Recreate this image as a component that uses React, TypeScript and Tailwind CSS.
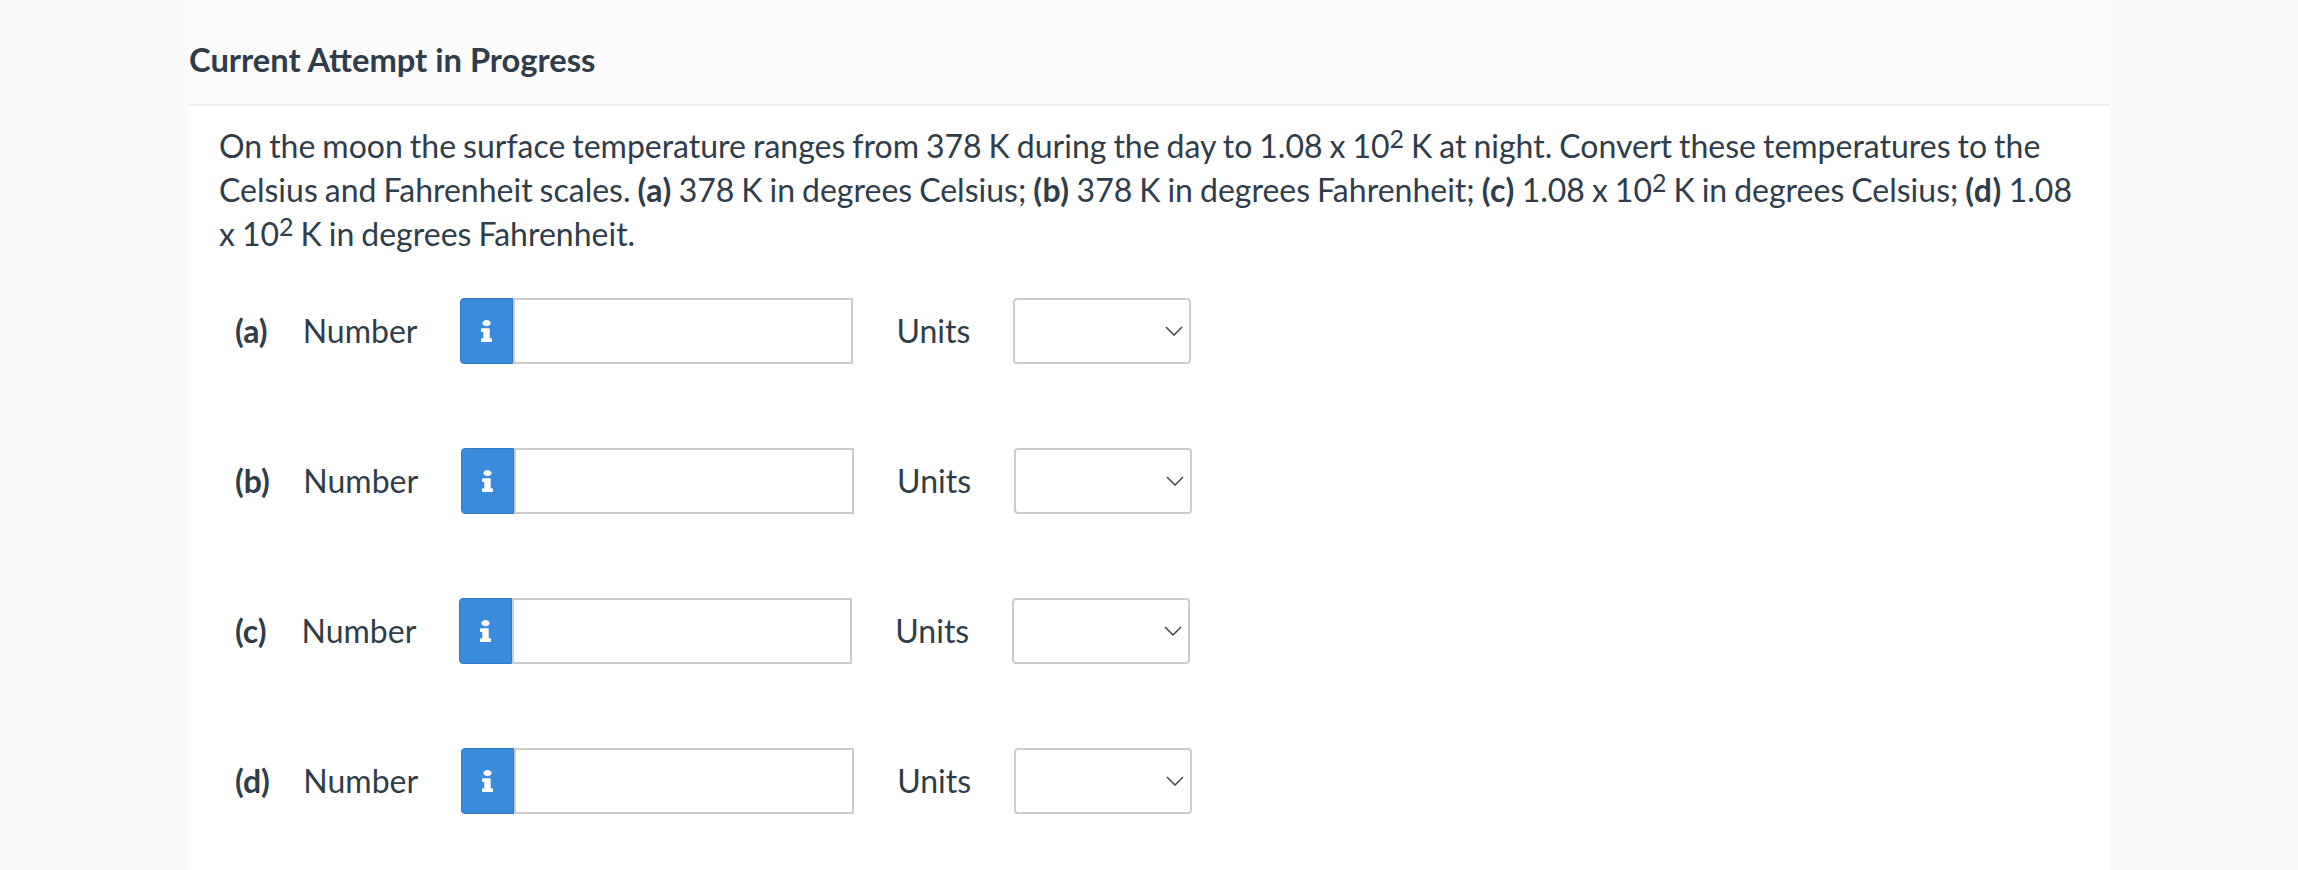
import { FaInfo } from "react-icons/fa";

const rows = [
  { label: "(a)", gap: "ml-[35px]" },
  { label: "(b)", gap: "ml-[33.5px]" },
  { label: "(c)", gap: "ml-[35px]" },
  { label: "(d)", gap: "ml-[33.5px]" },
];

const Row = ({ label, gap }: { label: string; gap: string }) => {
  return (
    <div className="flex items-center h-[66px] mb-[84px]">
      <span className="font-bold">{label}</span>
      <span className={gap}>Number</span>
      <button className="ml-[43px] w-[53px] h-[66px] flex items-center justify-center bg-[#3b8bdd] border border-[#3278c2] rounded-l-[4px] text-white">
        <FaInfo className="w-[11px] h-[22px]" preserveAspectRatio="none" />
      </button>
      <input
        type="text"
        className="w-[340px] h-[66px] bg-white border-2 border-[#cccccc] outline-none"
      />
      <span className="ml-[43px]">Units</span>
      <div className="ml-[43px] w-[178px] h-[66px] flex items-center justify-end pr-[6px] bg-white border-2 border-[#cccccc] rounded-[4px]">
        <svg width="18" height="10" viewBox="0 0 18 10" fill="none" stroke="#444444" strokeWidth="1.5">
          <path d="M1 1l8 8 8-8" />
        </svg>
      </div>
    </div>
  );
};

export default function App() {
  return (
    <div className="min-h-[870px] bg-[#fafafa] font-['Lato',sans-serif] text-[#2f3d4a]">
      <div className="w-[1921px] h-[870px] ml-[189px] bg-white overflow-hidden">
        <div className="h-[106px] flex items-center pt-[16px] bg-[#fcfcfc] border-b-2 border-[#eeeeee] text-[32.7px] font-bold">
          Current Attempt in Progress
        </div>
        <div className="pl-[30px] pr-[30px] pt-[18px] text-[32px] leading-[44px] [word-spacing:-1.2px] [&_b]:tracking-[0.5px] [&_sup]:text-[25px] [&_sup]:top-[-10px]">
          <p>
            On the moon the surface temperature ranges from 378 K during the day to 1.08 x 10
            <sup>2</sup> K at night. Convert these temperatures to the Celsius and Fahrenheit
            scales. <b>(a)</b> 378 K in degrees Celsius; <b>(b)</b> 378 K in degrees Fahrenheit;{" "}
            <b>(c)</b> 1.08 x 10<sup>2</sup> K in degrees Celsius; <b>(d)</b> 1.08 x 10
            <sup>2</sup> K in degrees Fahrenheit.
          </p>
          <div className="pl-[16px] pt-[42px]">
            {rows.map((r) => (
              <Row key={r.label} label={r.label} gap={r.gap} />
            ))}
          </div>
        </div>
      </div>
    </div>
  );
}
